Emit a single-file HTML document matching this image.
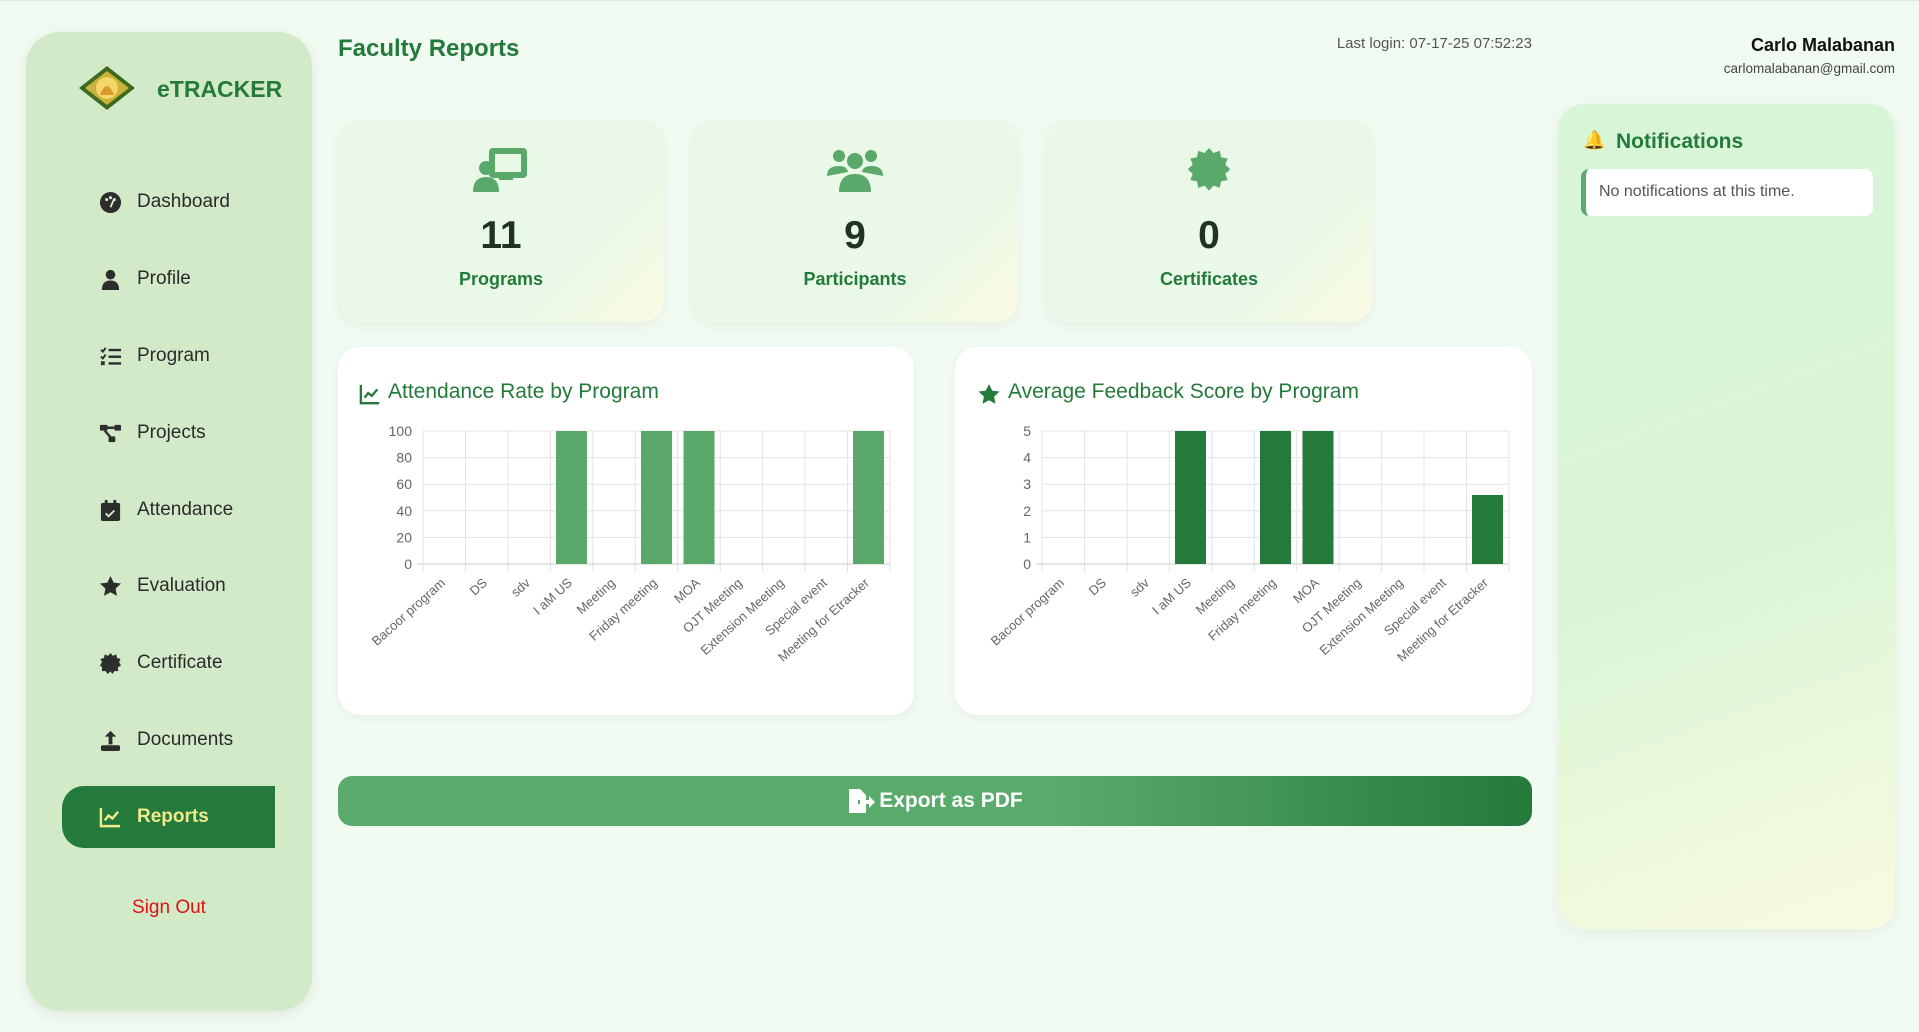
<!DOCTYPE html>
<html><head><meta charset="utf-8"><style>
*{margin:0;padding:0;box-sizing:border-box}
body{width:1919px;height:1032px;background:#f1fbf1;font-family:"Liberation Sans",sans-serif;position:relative;overflow:hidden;border-top:1px solid #e2e6e2}
.abs{position:absolute}
.side{left:26px;top:31px;width:286px;height:979px;background:#d3eac9;border-radius:34px;box-shadow:0 4px 14px rgba(0,0,0,.08)}
.nav{position:absolute;left:73px;font-size:19px;color:#2b2b2b;height:30px;line-height:30px}
.nav svg{position:absolute;left:0;top:4px;width:23px;height:23px;fill:#2d2d2d}
.nav span{padding-left:38px;white-space:nowrap}
.stat{top:119px;width:326px;height:202px;border-radius:22px;background:linear-gradient(135deg,#e9f8e7 0%,#e9f8e7 70%,#fbfbe3 100%);box-shadow:0 4px 12px rgba(0,0,0,.05);text-align:center}
.stat svg{position:absolute;left:135px;top:26px;width:56px;height:48px;fill:#5aa96a}
.stat .n{position:absolute;left:0;right:0;top:94px;font-size:39px;font-weight:bold;color:#1e3323}
.stat .l{position:absolute;left:0;right:0;top:149px;font-size:18px;color:#237a3a;font-weight:bold}
.card{top:346px;height:368px;background:#fff;border-radius:22px;box-shadow:0 3px 10px rgba(0,0,0,.05)}
.card h3{position:absolute;left:50px;top:33px;font-size:21px;font-weight:normal;color:#237a3a;white-space:nowrap}
.card svg.ch{position:absolute;left:0;top:0}
</style></head><body>
<div class="abs side">
 <svg class="abs" style="left:52px;top:33px" width="58" height="46" viewBox="0 0 58 46"><polygon points="29,1 57,23 29,45 1,23" fill="#3d6b1f"/><polygon points="29,6 51,23 29,40 7,23" fill="#c9b23a"/><circle cx="29" cy="23" r="11" fill="#f3d56a"/><path d="M22 30 Q29 12 36 30Z" fill="#d89a2b"/></svg>
 <div class="abs" style="left:131px;top:44px;font-size:23px;font-weight:bold;color:#237a3a">eTRACKER</div>
 <div class="nav" style="top:155px"><svg viewBox="0 0 24 24"><circle cx="12" cy="12" r="11"/><circle cx="8" cy="9" r="1.6" fill="#d3eac9"/><circle cx="12" cy="7" r="1.6" fill="#d3eac9"/><circle cx="16" cy="9" r="1.6" fill="#d3eac9"/><path d="M12 17 L15 10" stroke="#d3eac9" stroke-width="2"/></svg><span>Dashboard</span></div>
 <div class="nav" style="top:232px"><svg viewBox="0 0 24 24"><circle cx="12" cy="7" r="5"/><path d="M3 23 Q3 13 12 13 Q21 13 21 23Z"/></svg><span>Profile</span></div>
 <div class="nav" style="top:309px"><svg viewBox="0 0 24 24"><path d="M2 5l2 2 3-4M2 12l2 2 3-4" stroke="#2d2d2d" stroke-width="2" fill="none"/><rect x="10" y="4" width="13" height="2.5"/><rect x="10" y="11" width="13" height="2.5"/><rect x="10" y="18" width="13" height="2.5"/><rect x="2" y="17" width="4" height="4"/></svg><span>Program</span></div>
 <div class="nav" style="top:386px"><svg viewBox="0 0 24 24"><rect x="1" y="3" width="8" height="6" rx="1"/><rect x="16" y="3" width="7" height="6" rx="1"/><rect x="10" y="15" width="7" height="6" rx="1"/><path d="M8 6h8M6 9l6 7" stroke="#2d2d2d" stroke-width="2.5"/></svg><span>Projects</span></div>
 <div class="nav" style="top:463px"><svg viewBox="0 0 24 24"><rect x="2" y="4" width="20" height="19" rx="2"/><rect x="6" y="1" width="3" height="5"/><rect x="15" y="1" width="3" height="5"/><path d="M7 15l3 3 6-6" stroke="#d3eac9" stroke-width="2" fill="none"/></svg><span>Attendance</span></div>
 <div class="nav" style="top:539px"><svg viewBox="0 0 24 24"><path d="M12 1l3.3 7 7.7.9-5.7 5.3 1.5 7.6L12 18l-6.8 3.8 1.5-7.6L1 8.9 8.7 8z"/><path d="M12 7l1.6 3.6 3.8.4-2.8 2.6.8 3.8L12 15.5z" fill="#d3eac9" opacity="0"/></svg><span>Evaluation</span></div>
 <div class="nav" style="top:616px"><svg viewBox="0 0 24 24"><path d="M12 1l2.5 3 3.5-1.5.8 3.8 3.7.9-1.6 3.5L23 14l-3.3 2 .4 3.9-3.9-.1L14 23l-2-2.8L9 23l-2.2-3.2-3.9.1.4-3.9L1 14l2.1-3.3L1.5 7.2l3.7-.9.8-3.8L9.5 4z"/></svg><span>Certificate</span></div>
 <div class="nav" style="top:693px"><svg viewBox="0 0 24 24"><path d="M12 2l-6 6h4v8h4V8h4z"/><rect x="2" y="17" width="20" height="6" rx="2"/></svg><span>Documents</span></div>
 <div class="abs" style="left:36px;top:754px;width:213px;height:62px;background:#237a3a;border-radius:22px 0 0 22px"></div>
 <div class="nav" style="top:770px;color:#f1e98a;font-weight:bold"><svg viewBox="0 0 24 24" style="fill:none;stroke:#f1e98a;stroke-width:2.5"><path d="M2 2v19h20M6 15l4-5 4 3 6-7"/></svg><span>Reports</span></div>
 <div class="abs" style="left:0;width:286px;text-align:center;top:865px;font-size:19px;color:#e01010">Sign Out</div>
</div>
<div class="abs" style="left:338px;top:34px;font-size:24px;font-weight:bold;color:#237a3a">Faculty Reports</div>
<div class="abs" style="left:1300px;width:232px;text-align:right;top:34px;font-size:15px;color:#555">Last login: 07-17-25 07:52:23</div>
<div class="abs" style="left:1660px;width:235px;text-align:right;top:34px;font-size:18px;font-weight:bold;color:#111">Carlo Malabanan</div>
<div class="abs" style="left:1660px;width:235px;text-align:right;top:60px;font-size:13.5px;color:#444">carlomalabanan@gmail.com</div>

<div class="abs stat" style="left:338px"><svg viewBox="0 0 56 48"><rect x="16" y="2" width="38" height="30" rx="4"/><rect x="22" y="8" width="26" height="18" fill="#e9f8e7"/><circle cx="13" cy="22" r="7"/><path d="M0 46 Q0 31 13 31 Q26 31 26 46Z"/><rect x="26" y="26" width="14" height="8"/></svg><div class="n">11</div><div class="l">Programs</div></div>
<div class="abs stat" style="left:692px"><svg viewBox="0 0 56 48"><circle cx="12" cy="10" r="6"/><circle cx="44" cy="10" r="6"/><circle cx="28" cy="15" r="8"/><path d="M0 30 Q0 20 12 20 Q20 20 21 26Z M56 30 Q56 20 44 20 Q36 20 35 26Z M12 46 Q12 28 28 28 Q44 28 44 46Z"/></svg><div class="n">9</div><div class="l">Participants</div></div>
<div class="abs stat" style="left:1046px"><svg viewBox="0 0 56 48"><path d="M28 2l4.5 5 6.3-2.3 1.2 6.6 6.6 1.2-2.3 6.3 5 4.5-5 4.5 2.3 6.3-6.6 1.2-1.2 6.6-6.3-2.3-4.5 5-4.5-5-6.3 2.3-1.2-6.6-6.6-1.2 2.3-6.3-5-4.5 5-4.5-2.3-6.3 6.6-1.2 1.2-6.6 6.3 2.3z"/></svg><div class="n">0</div><div class="l">Certificates</div></div>

<div class="abs card" style="left:338px;width:576px">
 <svg class="abs" style="left:21px;top:36px" width="22" height="22" viewBox="0 0 24 24" fill="none" stroke="#237a3a" stroke-width="2.5"><path d="M2 2v20h20M6 16l4-5 4 3 6-7"/></svg>
 <h3>Attendance Rate by Program</h3>
 <svg class="ch" width="576" height="368" font-family="Liberation Sans" font-size="14" fill="#666">
  <g stroke="#e3e3e3" stroke-width="1">
   <line x1="85" y1="84" x2="552" y2="84"/><line x1="85" y1="110.6" x2="552" y2="110.6"/><line x1="85" y1="137.2" x2="552" y2="137.2"/><line x1="85" y1="163.8" x2="552" y2="163.8"/><line x1="85" y1="190.4" x2="552" y2="190.4"/>
   <line x1="85" y1="84" x2="85" y2="225"/><line x1="127.5" y1="84" x2="127.5" y2="225"/><line x1="170" y1="84" x2="170" y2="225"/><line x1="212.4" y1="84" x2="212.4" y2="225"/><line x1="254.8" y1="84" x2="254.8" y2="225"/><line x1="297.3" y1="84" x2="297.3" y2="225"/><line x1="339.7" y1="84" x2="339.7" y2="225"/><line x1="382.2" y1="84" x2="382.2" y2="225"/><line x1="424.6" y1="84" x2="424.6" y2="225"/><line x1="467" y1="84" x2="467" y2="225"/><line x1="509.5" y1="84" x2="509.5" y2="225"/><line x1="552" y1="84" x2="552" y2="225"/>
   <line x1="79" y1="217" x2="552" y2="217" stroke="#ccc"/>
  </g>
  <g fill="#5aa96a"><rect x="218" y="84" width="31" height="133"/><rect x="303" y="84" width="31" height="133"/><rect x="345.5" y="84" width="31" height="133"/><rect x="515" y="84" width="31" height="133"/></g>
  <g text-anchor="end"><text x="74" y="89">100</text><text x="74" y="115.6">80</text><text x="74" y="142.2">60</text><text x="74" y="168.8">40</text><text x="74" y="195.4">20</text><text x="74" y="222">0</text></g>
  <g text-anchor="end" font-size="13">
   <text transform="translate(108,237) rotate(-42)">Bacoor program</text>
   <text transform="translate(150,237) rotate(-42)">DS</text>
   <text transform="translate(193,237) rotate(-42)">sdv</text>
   <text transform="translate(235,237) rotate(-42)">I aM US</text>
   <text transform="translate(278,237) rotate(-42)">Meeting</text>
   <text transform="translate(320,237) rotate(-42)">Friday meeting</text>
   <text transform="translate(363,237) rotate(-42)">MOA</text>
   <text transform="translate(405,237) rotate(-42)">OJT Meeting</text>
   <text transform="translate(447,237) rotate(-42)">Extension Meeting</text>
   <text transform="translate(490,237) rotate(-42)">Special event</text>
   <text transform="translate(532,237) rotate(-42)">Meeting for Etracker</text>
  </g>
 </svg>
</div>

<div class="abs card" style="left:955px;width:577px">
 <svg class="abs" style="left:22px;top:36px" width="24" height="23" viewBox="0 0 24 24" fill="#237a3a"><path d="M12 1l3.3 7 7.7.9-5.7 5.3 1.5 7.6L12 18l-6.8 3.8 1.5-7.6L1 8.9 8.7 8z"/></svg>
 <h3 style="left:53px">Average Feedback Score by Program</h3>
 <svg class="ch" width="577" height="368" font-family="Liberation Sans" font-size="14" fill="#666">
 <g transform="translate(2,0)">
  <g stroke="#e3e3e3" stroke-width="1">
   <line x1="85" y1="84" x2="552" y2="84"/><line x1="85" y1="110.6" x2="552" y2="110.6"/><line x1="85" y1="137.2" x2="552" y2="137.2"/><line x1="85" y1="163.8" x2="552" y2="163.8"/><line x1="85" y1="190.4" x2="552" y2="190.4"/>
   <line x1="85" y1="84" x2="85" y2="225"/><line x1="127.5" y1="84" x2="127.5" y2="225"/><line x1="170" y1="84" x2="170" y2="225"/><line x1="212.4" y1="84" x2="212.4" y2="225"/><line x1="254.8" y1="84" x2="254.8" y2="225"/><line x1="297.3" y1="84" x2="297.3" y2="225"/><line x1="339.7" y1="84" x2="339.7" y2="225"/><line x1="382.2" y1="84" x2="382.2" y2="225"/><line x1="424.6" y1="84" x2="424.6" y2="225"/><line x1="467" y1="84" x2="467" y2="225"/><line x1="509.5" y1="84" x2="509.5" y2="225"/><line x1="552" y1="84" x2="552" y2="225"/>
   <line x1="79" y1="217" x2="552" y2="217" stroke="#ccc"/>
  </g>
  <g fill="#237a3a"><rect x="218" y="84" width="31" height="133"/><rect x="303" y="84" width="31" height="133"/><rect x="345.5" y="84" width="31" height="133"/><rect x="515" y="148" width="31" height="69"/></g>
  <g text-anchor="end"><text x="74" y="89">5</text><text x="74" y="115.6">4</text><text x="74" y="142.2">3</text><text x="74" y="168.8">2</text><text x="74" y="195.4">1</text><text x="74" y="222">0</text></g>
  <g text-anchor="end" font-size="13">
   <text transform="translate(108,237) rotate(-42)">Bacoor program</text>
   <text transform="translate(150,237) rotate(-42)">DS</text>
   <text transform="translate(193,237) rotate(-42)">sdv</text>
   <text transform="translate(235,237) rotate(-42)">I aM US</text>
   <text transform="translate(278,237) rotate(-42)">Meeting</text>
   <text transform="translate(320,237) rotate(-42)">Friday meeting</text>
   <text transform="translate(363,237) rotate(-42)">MOA</text>
   <text transform="translate(405,237) rotate(-42)">OJT Meeting</text>
   <text transform="translate(447,237) rotate(-42)">Extension Meeting</text>
   <text transform="translate(490,237) rotate(-42)">Special event</text>
   <text transform="translate(532,237) rotate(-42)">Meeting for Etracker</text>
  </g>
 </g>
 </svg>
</div>

<div class="abs" style="left:338px;top:775px;width:1194px;height:50px;border-radius:14px;background:linear-gradient(90deg,#5aab6b 0%,#5aab6b 60%,#237a3a 100%);color:#fff;font-size:21px;font-weight:bold;display:flex;align-items:center;justify-content:center">
 <svg width="28" height="24" viewBox="0 0 28 24" fill="#fff" style="margin-right:4px"><path d="M2 0h11l6 6v5h-8v4h8v9H2z"/><path d="M13 11h9V7l6 6-6 6v-4h-9z"/></svg>Export as PDF</div>

<div class="abs" style="left:1558px;top:103px;width:337px;height:825px;border-radius:26px;background:linear-gradient(160deg,#d8f5d8 0%,#daf5d6 55%,#fafbe0 100%);box-shadow:0 4px 14px rgba(0,0,0,.06)">
 <div class="abs" style="left:25px;top:26px;font-size:18px">🔔</div>
 <div class="abs" style="left:58px;top:26px;font-size:21px;font-weight:bold;color:#237a3a">Notifications</div>
 <div class="abs" style="left:23px;top:65px;width:292px;height:47px;background:#fff;border-radius:8px;border-left:5px solid #5aab6b;font-size:16px;color:#555;padding:14px 0 0 13px">No notifications at this time.</div>
</div>
</body></html>
